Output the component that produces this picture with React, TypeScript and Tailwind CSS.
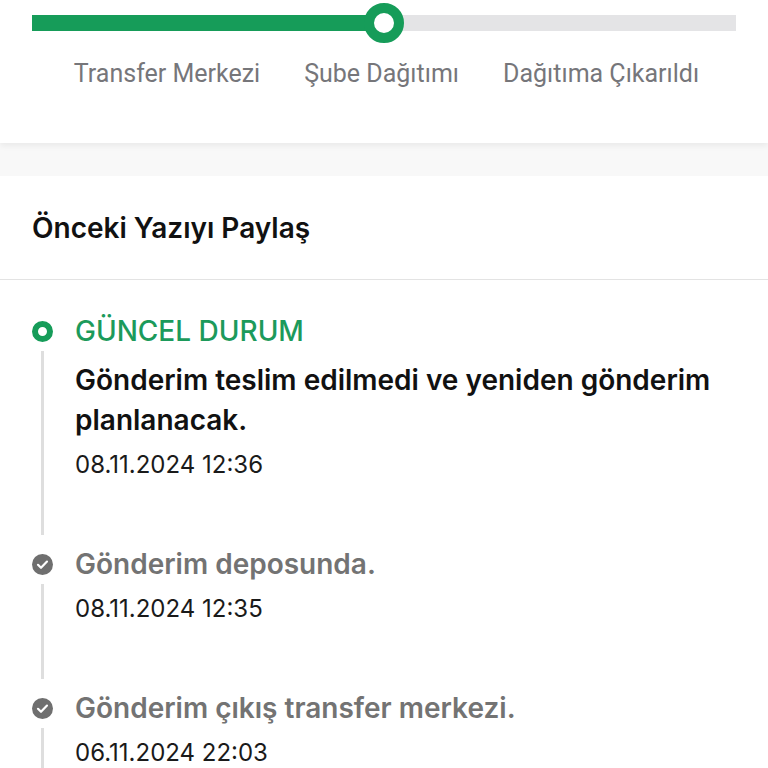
import React from 'react';

const steps = ['Transfer Merkezi', 'Şube Dağıtımı', 'Dağıtıma Çıkarıldı'];

const history = [
  {
    current: true,
    title: 'Gönderim teslim edilmedi ve yeniden gönderim planlanacak.',
    date: '08.11.2024 12:36',
  },
  { current: false, title: 'Gönderim deposunda.', date: '08.11.2024 12:35' },
  { current: false, title: 'Gönderim çıkış transfer merkezi.', date: '06.11.2024 22:03' },
];

const CheckIcon = () => (
  <svg width="21" height="21" viewBox="0 0 21 21">
    <circle cx="10.5" cy="10.5" r="10.5" fill="#6f6f6f" />
    <path d="M6 10.8l3 3 6-6.2" fill="none" stroke="#fff" strokeWidth="2.2" strokeLinecap="round" strokeLinejoin="round" />
  </svg>
);

const App = () => {
  return (
    <div className="w-[768px] h-[768px] overflow-hidden bg-white font-['Inter',sans-serif]">
      {/* Progress */}
      <div className="relative z-10 h-[143px] bg-white px-8 pt-[15px] shadow-[0_3px_6px_rgba(0,0,0,0.06)]">
        <div className="relative flex h-4">
          <div className="w-[352px] bg-[#169c59]" />
          <div className="flex-1 bg-[#e4e4e6]" />
          <div className="absolute left-[332px] top-[-12px] h-10 w-10 rounded-full border-[10px] border-[#169c59] bg-white" />
        </div>
        <div className="mt-[28px] flex justify-center gap-[44px] pl-[5px] font-['Roboto',sans-serif] text-[25px] leading-[30px] text-[#76767a]">
          {steps.map((s) => (
            <span key={s} className="whitespace-nowrap">{s}</span>
          ))}
        </div>
      </div>
      <div className="h-[33px] bg-[#f8f8f8]" />

      {/* Heading */}
      <div className="flex h-[104px] items-center border-b border-[#e3e3e3] px-8 text-[28px] font-semibold text-[#111]">
        Önceki Yazıyı Paylaş
      </div>

      {/* Timeline */}
      <div className="px-8 pt-[31px]">
        {history.map((h, i) => (
          <div key={i} className="flex">
            <div className="flex w-[21px] flex-col items-center">
              <div className="flex h-10 items-center">
                {h.current ? (
                  <div className="h-[21px] w-[21px] rounded-full border-[6px] border-[#169c59] bg-white" />
                ) : (
                  <CheckIcon />
                )}
              </div>
              <div className="mb-[9px] w-[3px] flex-1 bg-[#dedede]" />
            </div>
            <div className="ml-[22px] pb-[64px]">
              {h.current ? (
                <>
                  <div className="text-[28px] font-medium leading-10 text-[#1c9a5b]">GÜNCEL DURUM</div>
                  <div className="mt-[9px] w-[660px] text-[28px] font-semibold leading-10 text-[#111]">{h.title}</div>
                </>
              ) : (
                <div className="text-[28px] font-semibold leading-10 text-[#737373]">{h.title}</div>
              )}
              <div className="mt-[10px] text-[24px] leading-[30px] text-[#1a1a1a]">{h.date}</div>
            </div>
          </div>
        ))}
      </div>
    </div>
  );
};

export default App;
